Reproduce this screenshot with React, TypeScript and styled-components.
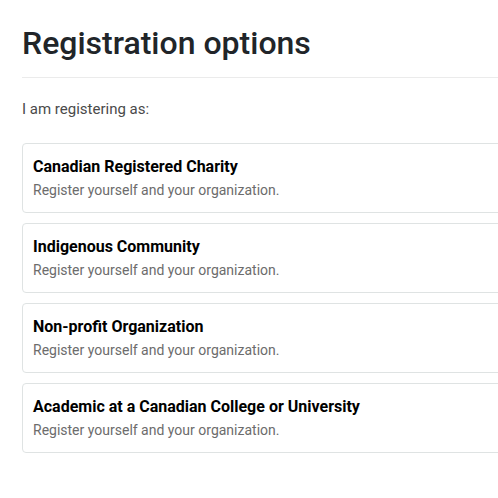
import React from "react";
import styled, { createGlobalStyle } from "styled-components";

const Global = createGlobalStyle`
  html, body { margin: 0; padding: 0; background: #fff; overflow: hidden; }
  body { font-family: Roboto, "Noto Sans", Arial, sans-serif; color: #212529; }
`;

const Page = styled.main`
  width: 560px;
  padding: 24px 0 0 22px;
  box-sizing: border-box;
`;

const Title = styled.h1`
  margin: 0;
  font-size: 32px;
  font-weight: 500;
  line-height: 1.2;
  color: #212529;
  padding-bottom: 15px;
  border-bottom: 1px solid #ebebeb;
`;

const Lead = styled.p`
  margin: 21px 0 24px;
  font-size: 15px;
  line-height: 20px;
  color: #4a4a4a;
`;

const List = styled.div`
  display: flex;
  flex-direction: column;
  gap: 10px;
`;

const Card = styled.button`
  display: flex;
  flex-direction: column;
  align-items: flex-start;
  text-align: left;
  box-sizing: border-box;
  height: 70px;
  padding: 12px 10px;
  background: #fff;
  border: 1px solid #dfe3e3;
  border-radius: 4px;
  font-family: inherit;
  cursor: pointer;
`;

const CardTitle = styled.span`
  font-size: 16px;
  font-weight: 700;
  line-height: 22px;
  color: #000;
`;

const CardText = styled.span`
  margin-top: 1px;
  font-size: 14px;
  line-height: 22px;
  color: #6c6c6c;
`;

const options = [
  "Canadian Registered Charity",
  "Indigenous Community",
  "Non-profit Organization",
  "Academic at a Canadian College or University",
];

export default function App() {
  return (
    <>
      <Global />
      <Page>
        <Title>Registration options</Title>
        <Lead>I am registering as:</Lead>
        <List>
          {options.map((o) => (
            <Card key={o}>
              <CardTitle>{o}</CardTitle>
              <CardText>Register yourself and your organization.</CardText>
            </Card>
          ))}
        </List>
      </Page>
    </>
  );
}
